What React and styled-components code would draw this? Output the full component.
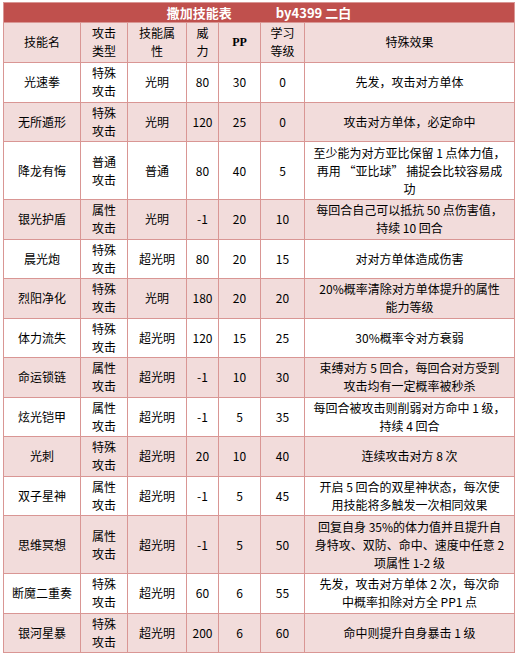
import React from "react";
import styled, { createGlobalStyle } from "styled-components";

const GlobalStyle = createGlobalStyle`
  body {
    margin: 0;
    padding: 2px 3px;
    background: #ffffff;
    font-family: "Noto Sans CJK SC", "Noto Sans", sans-serif;
  }
`;

const Table = styled.table`
  width: 511px;
  border-collapse: collapse;
  table-layout: fixed;
  font-size: 12px;
  line-height: 18px;
  color: #000;
  border: 1px solid #d99694;
`;

const TitleCell = styled.th`
  background: #c0504d;
  color: #ffffff;
  height: 19px;
  padding: 0;
  border: 1px solid #d99694;
  font-size: 13px;
  font-weight: bold;
`;

const TitleLine = styled.div`
  display: flex;
  justify-content: center;
  gap: 44px;
  line-height: 19px;
`;

const HeadCell = styled.th`
  background: #f2dcdb;
  text-align: center;
  vertical-align: middle;
  padding: 1px 2px 2px;
  border: 1px solid #d99694;
  font-family: ${({ serif }) =>
    serif ? `"Liberation Serif", serif` : `inherit`};
  font-weight: ${({ serif }) => (serif ? "bold" : "normal")};
`;

const Row = styled.tr`
  height: ${({ lines }) => (lines > 2 ? 58 : 39.5)}px;
`;

const Cell = styled.td`
  background: ${({ pink }) => (pink ? "#f2dcdb" : "#ffffff")};
  text-align: center;
  vertical-align: middle;
  padding: 1px 2px;
  border: 1px solid #d99694;
  white-space: nowrap;
`;

const cols = [77, 47, 59, 32, 42, 44, 210];

const skills = [
  ["光速拳", "特殊", "光明", "80", "30", "0", ["先发，攻击对方单体"]],
  ["无所遁形", "特殊", "光明", "120", "25", "0", ["攻击对方单体，必定命中"]],
  ["降龙有悔", "普通", "普通", "80", "40", "5", ["至少能为对方亚比保留 1 点体力值，", "再用 “亚比球” 捕捉会比较容易成", "功"]],
  ["银光护盾", "属性", "光明", "-1", "20", "10", ["每回合自己可以抵抗 50 点伤害值，", "持续 10 回合"]],
  ["晨光炮", "特殊", "超光明", "80", "20", "15", ["对对方单体造成伤害"]],
  ["烈阳净化", "特殊", "光明", "180", "20", "20", ["20%概率清除对方单体提升的属性", "能力等级"]],
  ["体力流失", "特殊", "超光明", "120", "15", "25", ["30%概率令对方衰弱"]],
  ["命运锁链", "属性", "超光明", "-1", "10", "30", ["束缚对方 5 回合，每回合对方受到", "攻击均有一定概率被秒杀"]],
  ["炫光铠甲", "属性", "超光明", "-1", "5", "35", ["每回合被攻击则削弱对方命中 1 级，", "持续 4 回合"]],
  ["光刺", "特殊", "超光明", "20", "10", "40", ["连续攻击对方 8 次"]],
  ["双子星神", "属性", "超光明", "-1", "5", "45", ["开启 5 回合的双星神状态，每次使", "用技能将多触发一次相同效果"]],
  ["思维冥想", "属性", "超光明", "-1", "5", "50", ["回复自身 35%的体力值并且提升自", "身特攻、双防、命中、速度中任意 2", "项属性 1-2 级"]],
  ["断魔二重奏", "特殊", "超光明", "60", "6", "55", ["先发，攻击对方单体 2 次，每次命", "中概率扣除对方全 PP1 点"]],
  ["银河星暴", "特殊", "超光明", "200", "6", "60", ["命中则提升自身暴击 1 级"]],
];

const Lines = ({ lines }) =>
  lines.map((l, i) => (
    <React.Fragment key={i}>
      {i > 0 && <br />}
      {l}
    </React.Fragment>
  ));

export default function App() {
  return (
    <>
      <GlobalStyle />
      <Table lang="zh-CN">
        <colgroup>
          {cols.map((w, i) => (
            <col key={i} style={{ width: w }} />
          ))}
        </colgroup>
        <thead>
          <tr>
            <TitleCell colSpan={7}>
              <TitleLine>
                <span>撒加技能表</span>
                <span>by4399 二白</span>
              </TitleLine>
            </TitleCell>
          </tr>
          <Row lines={2}>
            <HeadCell>技能名</HeadCell>
            <HeadCell>
              攻击
              <br />
              类型
            </HeadCell>
            <HeadCell>
              技能属
              <br />性
            </HeadCell>
            <HeadCell>
              威<br />力
            </HeadCell>
            <HeadCell serif>PP</HeadCell>
            <HeadCell>
              学习
              <br />
              等级
            </HeadCell>
            <HeadCell>特殊效果</HeadCell>
          </Row>
        </thead>
        <tbody>
          {skills.map(([name, type, attr, power, pp, level, effect], i) => {
            const pink = i % 2 === 1;
            return (
              <Row key={name} lines={effect.length}>
                <Cell pink={pink}>{name}</Cell>
                <Cell pink={pink}>
                  {type}
                  <br />
                  攻击
                </Cell>
                <Cell pink={pink}>{attr}</Cell>
                <Cell pink={pink}>{power}</Cell>
                <Cell pink={pink}>{pp}</Cell>
                <Cell pink={pink}>{level}</Cell>
                <Cell pink={pink}>
                  <Lines lines={effect} />
                </Cell>
              </Row>
            );
          })}
        </tbody>
      </Table>
    </>
  );
}
